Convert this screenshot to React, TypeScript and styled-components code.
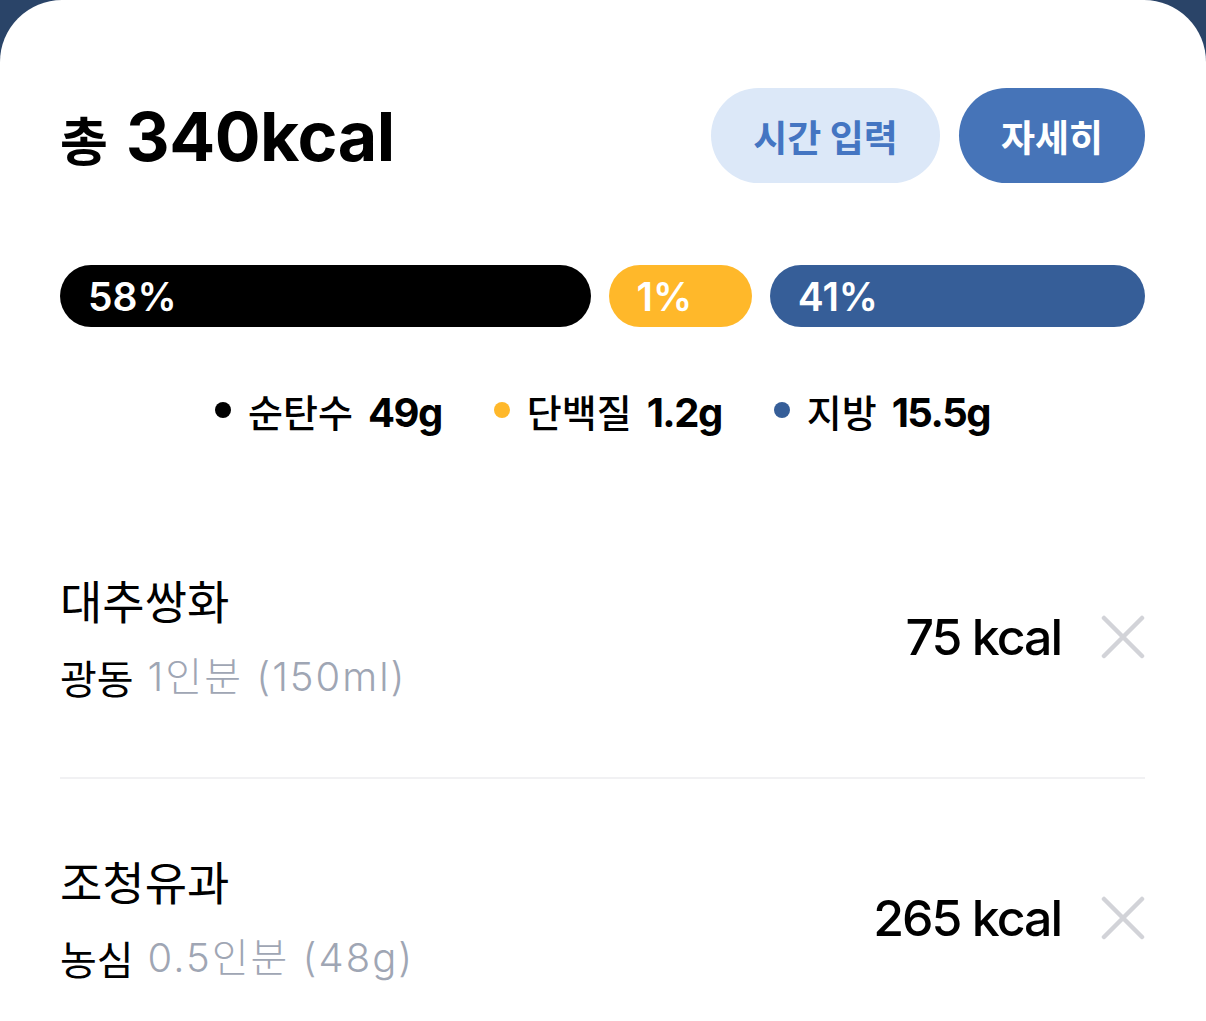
import React from "react";
import styled, { createGlobalStyle } from "styled-components";

const GlobalStyle = createGlobalStyle`
  html, body { margin: 0; padding: 0; background: #2a4468; }
  body { font-family: Inter, "Noto Sans CJK KR", sans-serif; }
  * { box-sizing: border-box; }
`;

const Sheet = styled.div`
  background: #ffffff;
  border-radius: 62px 62px 0 0;
  min-height: 1021px;
  padding: 88px 61px 0 60px;
  overflow: hidden;
`;

const Header = styled.div`
  display: flex;
  align-items: center;
  justify-content: space-between;
  height: 95px;
`;

const Title = styled.h1`
  margin: 0;
  display: flex;
  align-items: baseline;
  gap: 18px;
  color: #000;
`;

const TitleLabel = styled.span`
  font-family: "Noto Sans CJK KR", sans-serif;
  font-size: 52px;
  font-weight: 700;
`;

const TitleValue = styled.span`
  font-family: Inter, sans-serif;
  font-size: 68px;
  font-weight: 700;
  letter-spacing: -0.5px;
`;

const Actions = styled.div`
  display: flex;
  gap: 19px;
`;

const PillButton = styled.button<{ $primary?: boolean }>`
  height: 95px;
  padding: 0 42px;
  border: none;
  border-radius: 48px;
  font-family: "Noto Sans CJK KR", sans-serif;
  font-size: 37px;
  font-weight: 700;
  background: ${(p) => (p.$primary ? "#4674b8" : "#dce8f8")};
  color: ${(p) => (p.$primary ? "#ffffff" : "#4475c2")};
  cursor: pointer;
`;

const Bars = styled.div`
  display: flex;
  gap: 18px;
  margin-top: 82px;
`;

const Bar = styled.div<{ $color: string; $grow: number }>`
  flex: ${(p) => p.$grow} 1 0;
  height: 62px;
  border-radius: 31px;
  background: ${(p) => p.$color};
  color: #fff;
  display: flex;
  align-items: center;
  padding-left: 28px;
  font-family: Inter, sans-serif;
  font-size: 39px;
  font-weight: 600;
`;

const Legend = styled.div`
  display: flex;
  justify-content: center;
  align-items: center;
  gap: 52px;
  margin-top: 58px;
  height: 50px;
`;

const LegendItem = styled.div`
  display: flex;
  align-items: center;
  gap: 17px;
`;

const Dot = styled.span<{ $color: string }>`
  width: 16px;
  height: 16px;
  border-radius: 50%;
  background: ${(p) => p.$color};
`;

const LegendLabel = styled.span`
  font-family: "Noto Sans CJK KR", sans-serif;
  font-size: 38px;
  font-weight: 500;
  color: #000;
`;

const LegendValue = styled.span`
  font-family: Inter, sans-serif;
  font-size: 40px;
  font-weight: 700;
  letter-spacing: -1.5px;
  color: #000;
  margin-left: 15px;
`;

const List = styled.div`
  margin-top: 62px;
`;

const Row = styled.div`
  height: 280px;
  display: flex;
  align-items: center;
  justify-content: space-between;
  & + & {
    border-top: 2px solid #f1f1f3;
  }
`;

const Info = styled.div`
  display: flex;
  flex-direction: column;
  gap: 26px;
`;

const Name = styled.div`
  font-family: "Noto Sans CJK KR", sans-serif;
  font-size: 46px;
  font-weight: 400;
  line-height: 54px;
  color: #000;
`;

const Sub = styled.div`
  font-size: 40px;
  line-height: 50px;
  display: flex;
  gap: 14px;
`;

const Brand = styled.span`
  font-family: "Noto Sans CJK KR", sans-serif;
  color: #000;
`;

const Amount = styled.span`
  font-family: Inter, "Noto Sans CJK KR", sans-serif;
  font-weight: 300;
  color: #9fa6b4;
  letter-spacing: 2px;
`;

const Right = styled.div`
  display: flex;
  align-items: center;
  gap: 40px;
`;

const Kcal = styled.span`
  font-family: Inter, sans-serif;
  font-size: 50px;
  font-weight: 500;
  letter-spacing: -2px;
  color: #000;
`;

const RemoveButton = styled.button`
  width: 44px;
  height: 44px;
  padding: 0;
  border: none;
  background: none;
  display: flex;
  align-items: center;
  justify-content: center;
  cursor: pointer;
`;

const CloseIcon = () => (
  <svg width="44" height="44" viewBox="0 0 44 44" fill="none">
    <path d="M3 3 L41 41 M41 3 L3 41" stroke="#d2d3d8" strokeWidth="4.5" strokeLinecap="round" />
  </svg>
);

const bars = [
  { label: "58%", color: "#000000", grow: 502 },
  { label: "1%", color: "#ffb82a", grow: 115 },
  { label: "41%", color: "#365e98", grow: 347 },
];

const legend = [
  { label: "순탄수", value: "49g", color: "#000000" },
  { label: "단백질", value: "1.2g", color: "#ffb82a" },
  { label: "지방", value: "15.5g", color: "#365e98" },
];

const foods = [
  { name: "대추쌍화", brand: "광동", amount: "1인분 (150ml)", kcal: "75 kcal" },
  { name: "조청유과", brand: "농심", amount: "0.5인분 (48g)", kcal: "265 kcal" },
];

export default function App() {
  return (
    <>
      <GlobalStyle />
      <Sheet>
        <Header>
          <Title>
            <TitleLabel>총</TitleLabel>
            <TitleValue>340kcal</TitleValue>
          </Title>
          <Actions>
            <PillButton>시간 입력</PillButton>
            <PillButton $primary>자세히</PillButton>
          </Actions>
        </Header>
        <Bars>
          {bars.map((b) => (
            <Bar key={b.label} $color={b.color} $grow={b.grow}>
              {b.label}
            </Bar>
          ))}
        </Bars>
        <Legend>
          {legend.map((l) => (
            <LegendItem key={l.label}>
              <Dot $color={l.color} />
              <span>
                <LegendLabel>{l.label}</LegendLabel>
                <LegendValue>{l.value}</LegendValue>
              </span>
            </LegendItem>
          ))}
        </Legend>
        <List>
          {foods.map((f) => (
            <Row key={f.name}>
              <Info>
                <Name>{f.name}</Name>
                <Sub>
                  <Brand>{f.brand}</Brand>
                  <Amount>{f.amount}</Amount>
                </Sub>
              </Info>
              <Right>
                <Kcal>{f.kcal}</Kcal>
                <RemoveButton aria-label="삭제">
                  <CloseIcon />
                </RemoveButton>
              </Right>
            </Row>
          ))}
        </List>
      </Sheet>
    </>
  );
}
